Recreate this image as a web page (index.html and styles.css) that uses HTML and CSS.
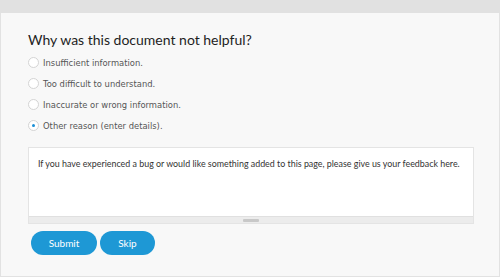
FILE: index.html
```html
<!DOCTYPE html>
<html lang="en">
<head>
  <meta charset="UTF-8">
  <meta name="viewport" content="width=device-width, initial-scale=1.0">
  <title>Feedback</title>
  <link rel="stylesheet" href="styles.css">
</head>
<body>
  <div class="top-band"></div>
  <div class="panel">
    <h1>Why was this document not helpful?</h1>
    <div class="options">
      <label class="option"><input type="radio" name="reason" value="insufficient"><span>Insufficient information.</span></label>
      <label class="option"><input type="radio" name="reason" value="difficult"><span>Too difficult to understand.</span></label>
      <label class="option"><input type="radio" name="reason" value="inaccurate"><span>Inaccurate or wrong information.</span></label>
      <label class="option"><input type="radio" name="reason" value="other" checked><span>Other reason (enter details).</span></label>
    </div>
    <div class="feedback">
      <textarea placeholder="If you have experienced a bug or would like something added to this page, please give us your feedback here."></textarea>
      <div class="grip"><span class="handle"></span></div>
    </div>
    <div class="buttons">
      <button class="btn btn-submit">Submit</button>
      <button class="btn btn-skip">Skip</button>
    </div>
  </div>
</body>
</html>
```

FILE: styles.css
```css
body {
  margin: 0;
  width: 500px;
  height: 277px;
  background: #e1e1e1;
  font-family: Lato, "Open Sans", sans-serif;
  overflow: hidden;
}

.top-band {
  height: 13px;
  background: #e1e1e1;
}

.panel {
  box-sizing: border-box;
  height: 264px;
  background: #f8f8f8;
  border: 1px solid #e2e2e2;
  border-top: none;
  padding: 18px 26px 0 27px;
}

h1 {
  margin: 0 0 3px 0;
  font-size: 14px;
  font-weight: normal;
  color: #1e1e1e;
  line-height: 18px;
}

.options {
  display: flex;
  flex-direction: column;
}

.option {
  display: flex;
  align-items: center;
  height: 21px;
  font-family: "DejaVu Sans", Verdana, sans-serif;
  font-size: 8.4px;
  color: #555;
}

.option input {
  appearance: none;
  box-sizing: border-box;
  width: 11px;
  height: 11px;
  margin: 0 4px 0 0;
  border: 1px solid #d4d4d4;
  border-radius: 50%;
  background: #fff;
  position: relative;
}

.option input:checked::after {
  content: "";
  position: absolute;
  left: 3px;
  top: 3px;
  width: 3px;
  height: 3px;
  border-radius: 50%;
  background: #1a8fd6;
}

.feedback {
  margin-top: 11px;
  border: 1px solid #e4e4e4;
  background: #fff;
  width: 446px;
  box-sizing: border-box;
}

.feedback textarea {
  display: block;
  box-sizing: border-box;
  width: 100%;
  height: 68px;
  border: none;
  resize: none;
  outline: none;
  padding: 10px 9px;
  font-family: Lato, "Open Sans", sans-serif;
  font-size: 8.9px;
  color: #333;
  background: #fff;
}

.feedback textarea::placeholder {
  color: #333;
  opacity: 1;
}

.grip {
  height: 6px;
  background: #ececec;
  border-top: 1px solid #e0e0e0;
  display: flex;
  justify-content: center;
  align-items: center;
}

.handle {
  width: 16px;
  height: 3px;
  background: #c8c8c8;
  border-radius: 1px;
}

.buttons {
  display: flex;
  gap: 3px;
  margin: 7px 0 0 3px;
}

.btn {
  height: 24px;
  border: none;
  border-radius: 12px;
  background: #1e98d5;
  color: #fff;
  font-family: Lato, "Open Sans", sans-serif;
  font-size: 10px;
  cursor: pointer;
}

.btn-submit {
  width: 66px;
}

.btn-skip {
  width: 55px;
}
```
